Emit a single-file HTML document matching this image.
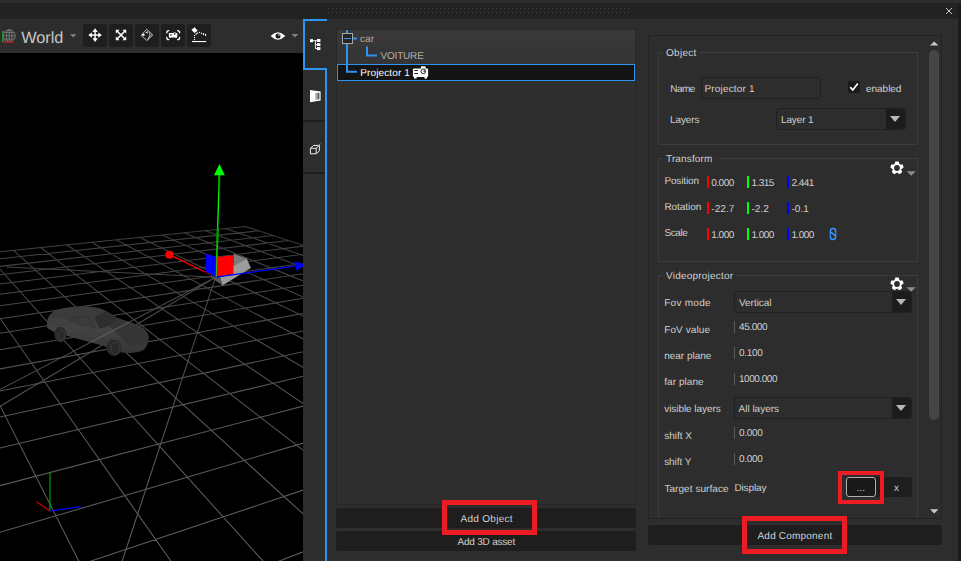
<!DOCTYPE html><html><head><meta charset="utf-8"><title>Scene editor</title><style>
*{box-sizing:border-box;margin:0;padding:0}
html,body{width:961px;height:561px;overflow:hidden;background:#2d2d2d}
body{position:relative;font-family:"Liberation Sans",sans-serif;font-size:10px;color:#d0d0d0;text-rendering:geometricPrecision}
.a{position:absolute}
.t{position:absolute;white-space:nowrap;line-height:12px;height:12px}
.btn{position:absolute;background:#1e1e1e;border-radius:3px}
.tb{position:absolute;top:24px;width:24px;height:23px;background:#1e1e1e;border-radius:3px}
.gb{position:absolute;border:1px solid #3c3c3c}
.gl{position:absolute;background:#2d2d2d;padding:0 3px;line-height:12px;height:12px;white-space:nowrap}
.bar{position:absolute;width:2px;height:12px}
.vb{position:absolute;width:1px;height:12px;background:#5a5a5a;left:734px}
.combo{position:absolute;border:1px solid #202020;border-radius:3px;background:#2d2d2d}
.dd{position:absolute;right:0;top:0;bottom:0;width:19px;background:#1c1c1c;border-radius:0 3px 3px 0}
.dd:after{content:"";position:absolute;left:4px;top:7px;border-left:5px solid transparent;border-right:5px solid transparent;border-top:6px solid #b8b8b8}
.red{position:absolute;border:5px solid #ed1c24}
</style></head><body>
<div class="a" style="left:0;top:3px;width:961px;height:16px;background:#222"></div>
<div class="a" style="left:958px;top:3px;width:3px;height:558px;background:#1c1c1c"></div>
<svg class="a" style="left:328px;top:8px" width="620" height="6"><defs><pattern id="dp" width="4" height="4" patternUnits="userSpaceOnUse"><rect width="1" height="1" fill="#454545"/></pattern></defs><rect width="301" height="5" fill="url(#dp)"/></svg>
<svg class="a" style="left:945px;top:7px" width="8" height="8"><path d="M1 1L7 7M7 1L1 7" stroke="#c8c8c8" stroke-width="1" fill="none"/></svg>
<svg class="a" style="left:0;top:26px" width="18" height="20" viewBox="0 26 18 20">
<g fill="none" stroke="#7c7c7c" stroke-width="0.9"><circle cx="9.2" cy="35.8" r="6"/><ellipse cx="9.2" cy="35.8" rx="2.8" ry="6"/><path d="M9.2 29.8V41.8M3.2 35.8H15.2M4.2 32.6H14.2M4.2 39H14.2"/></g>
<rect x="2" y="30.8" width="1.7" height="11.2" fill="#2c8c38"/><rect x="3" y="41.3" width="10.7" height="1.6" fill="#a82222"/></svg>
<div class="t" style="left:21.2px;top:28px;font-size:16.3px;line-height:20px;height:20px;color:#c8c8c8">World</div>
<svg class="a" style="left:69px;top:33px" width="9" height="6"><path d="M1 1.2H7.4L4.2 4.4z" fill="#858585"/></svg>
<div class="tb" style="left:83px"></div>
<div class="tb" style="left:109px"></div>
<div class="tb" style="left:135px"></div>
<div class="tb" style="left:161px"></div>
<div class="tb" style="left:187px"></div>
<svg class="a" style="left:83px;top:24px" width="24" height="23" viewBox="83 24 24 23"><g fill="#fff">
<path d="M95.1 28.3L97.8 31.9H92.4zM95.1 41.9L92.4 38.3H97.8zM88.3 35.1L91.9 32.4V37.8zM101.9 35.1L98.3 37.8V32.4z"/>
<rect x="94.4" y="31" width="1.4" height="8.2"/><rect x="91" y="34.4" width="8.2" height="1.4"/></g></svg>
<svg class="a" style="left:109px;top:24px" width="24" height="23" viewBox="109 24 24 23"><g fill="#fff">
<path d="M115.8 29.8H119.6L115.8 33.6zM126.2 29.8V33.6L122.4 29.8zM115.8 40.2V36.4L119.6 40.2zM126.2 40.2H122.4L126.2 36.4z"/></g>
<path d="M117 31L125 39M125 31L117 39" stroke="#fff" stroke-width="1.5" fill="none"/></svg>
<svg class="a" style="left:135px;top:24px" width="24" height="23" viewBox="135 24 24 23">
<path d="M146.7 29.2L152.8 35L147 40.6L141.1 35.5z" fill="none" stroke="#c4c4c4" stroke-width="0.9" stroke-linejoin="round"/>
<circle cx="143.4" cy="34.7" r="1.3" fill="#fff"/><path d="M145.4 32.4L147.6 30.9L147.7 33.6z" fill="#fff"/>
<path d="M149.2 31.6Q151 35.4 147.6 40M147.8 39.4L151.8 34" stroke="#c4c4c4" stroke-width="0.8" fill="none"/></svg>
<svg class="a" style="left:161px;top:24px" width="24" height="23" viewBox="161 24 24 23">
<g fill="none" stroke="#fff" stroke-width="1.3" stroke-linecap="round"><path d="M168.8 30.6Q166.8 30.6 166.8 32.8M177.6 30.6Q179.6 30.6 179.6 32.8M168.8 39.6Q166.8 39.6 166.8 37.4M177.6 39.6Q179.6 39.6 179.6 37.4"/></g>
<rect x="168.9" y="33" width="8.4" height="4.4" rx="0.6" fill="#fff"/><rect x="169.4" y="37.2" width="1.6" height="0.8" fill="#fff"/><rect x="175.2" y="37.2" width="1.6" height="0.8" fill="#fff"/><rect x="170" y="34.2" width="1.9" height="1.4" fill="#555"/><circle cx="174.6" cy="33.8" r="1.6" fill="#fff"/><circle cx="174.6" cy="33.9" r="0.9" fill="#333"/></svg>
<svg class="a" style="left:187px;top:24px" width="24" height="23" viewBox="187 24 24 23">
<path d="M191.4 29.7L194.7 27.2L197.6 30.7L194.4 33z" fill="#fff"/><path d="M195.3 33.8L197.8 32.3L198.3 33.3L195.9 34.9z" fill="#e4e4e4"/>
<g fill="#f0f0f0"><rect x="198.9" y="31.9" width="1.1" height="1.1"/><rect x="200.9" y="32.7" width="1.1" height="1.3"/><rect x="202.9" y="33.1" width="1.2" height="2"/><rect x="205" y="33.8" width="1.1" height="2.2"/>
<rect x="193.9" y="34.9" width="1.2" height="1.2"/><rect x="193.9" y="36.9" width="1.2" height="1.2"/><rect x="193.9" y="39" width="1.2" height="1.2"/></g>
<rect x="192" y="41" width="14.2" height="1.1" fill="#fff"/></svg>
<svg class="a" style="left:268px;top:30px" width="34" height="12" viewBox="268 30 34 12">
<path d="M270.6 36Q277.9 28.6 285.3 36Q277.9 43.4 270.6 36z" fill="#fff"/><circle cx="278" cy="35.9" r="2.5" fill="#1a1a1a"/><circle cx="278.8" cy="35" r="1" fill="#aaa"/>
<path d="M291.4 34H298.4L294.9 37.4z" fill="#808080"/></svg>
<svg class="a" style="left:0;top:53px" width="303" height="508" viewBox="0 53 303 508"><rect x="0" y="53" width="303" height="508" fill="#000"/>
<defs><linearGradient id="gg" gradientUnits="userSpaceOnUse" x1="0" y1="230" x2="0" y2="480"><stop offset="0" stop-color="#3c3c3c"/><stop offset="0.3" stop-color="#4a4a4a"/><stop offset="1" stop-color="#5e5e5e"/></linearGradient></defs>
<path d="M245.4 226.4L-326.7 285.3M258.8 230.8L-335.0 294.8M273.1 235.5L-344.3 305.3M288.5 240.5L-354.5 316.9M304.9 245.9L-366.0 329.8M322.7 251.7L-378.8 344.4M341.8 258.0L-393.4 360.8M362.6 264.8L-410.0 379.6M385.1 272.2L-429.1 401.3M409.7 280.2L-451.4 426.5M436.6 289.0L-477.6 456.2M466.1 298.7L-509.0 491.7M498.8 309.5L-547.3 535.0M535.1 321.3L-594.9 588.8M575.7 334.6L-655.7 657.6M621.2 349.6L-736.2 748.7M672.9 366.5L-847.7 874.9M731.8 385.8L-1012.5 1061.4M799.8 408.1L-1280.8 1365.0M879.0 434.0L-1794.6 1946.3M972.4 464.7L-3174.9 3508.1M245.4 226.4L972.4 464.7M225.6 228.4L949.2 481.7M205.1 230.5L923.7 500.4M184.0 232.7L895.6 521.0M162.1 235.0L864.5 543.9M139.5 237.3L829.7 569.4M116.1 239.7L790.7 598.0M91.8 242.2L746.7 630.3M66.7 244.8L696.5 667.2M40.6 247.5L638.8 709.5M13.6 250.3L571.8 758.6M-14.5 253.2L493.1 816.4M-43.8 256.2L399.2 885.3M-74.1 259.3L285.4 968.9M-105.8 262.6L144.4 1072.3M-138.7 266.0L-34.8 1203.8M-173.1 269.5L-269.9 1376.3M-209.0 273.2L-592.3 1612.9M-246.5 277.1L-1061.3 1957.1M-285.6 281.1L-1806.8 2504.1M-326.7 285.3L-3174.9 3508.1" stroke="url(#gg)" stroke-width="1.05" fill="none"/>
<path d="M215.6 277.2L6.2 266.9M215.6 277.2L-64.7 445.2M215.6 277.2L-64.7 423.2M215.6 277.2L103.5 617.8" stroke="url(#gg)" stroke-width="1.05" fill="none"/>
<g>
<defs><linearGradient id="cg" x1="0" y1="0" x2="0" y2="1"><stop offset="0" stop-color="#3c3c3c"/><stop offset="0.5" stop-color="#434343"/><stop offset="1" stop-color="#353535"/></linearGradient>
<filter id="cb" x="-5%" y="-5%" width="110%" height="110%"><feGaussianBlur stdDeviation="0.5"/></filter></defs>
<g filter="url(#cb)">
<path d="M47.2 328Q46.6 320 48.6 316.8Q51 312.6 56.4 310.2Q62 308 68 307.4Q78 306 88 306.6Q96 307 102.4 309.4Q108 311.6 117 318L131 322.6Q139.4 325.4 143.6 328.8Q148.2 332.4 148.6 336.4Q149 340 147.8 343.4Q146 348.4 142.4 350.8Q138 352.8 131 353L121 352.4L104.6 346.3L67.5 336L54.4 332.3z" fill="url(#cg)"/>
<path d="M49 317Q52 312.6 57 310.4Q64 308 76 306.8Q90 306 100 308.6Q107 311 117 318L131 322.8Q141 326.4 144.4 329.6Q139 331 131 330Q122 329 112 326L96 323Q80 320 49 317z" fill="#3b3b3b"/>
<path d="M94.5 316.8L106.2 311L117.9 319L118 321.6L109.1 325.8L99.6 328.6z" fill="#2d2d2d"/>
<path d="M117.9 319L130.3 322.7L143.5 329.2Q148.4 333 148.5 337.5L147.5 343Q140 346 128 345Q120 336 109.1 325.8z" fill="#353535"/>
<path d="M68.8 320.8L73 317.2L77 316.7L76 322.6zM77.8 322.2L80 316.8L86.6 316.8L92.6 321L96.2 328.2L78.2 323.9z" fill="#3a3a3a" stroke="#303030" stroke-width="0.6"/>
<ellipse cx="114" cy="347.8" rx="7.6" ry="8.2" fill="#2a2a2a"/><ellipse cx="115.4" cy="348.2" rx="4.6" ry="6" fill="none" stroke="#3e3e3e" stroke-width="0.9"/>
<ellipse cx="60.4" cy="334.6" rx="6.2" ry="7.8" fill="#2a2a2a"/><ellipse cx="61.4" cy="335.2" rx="3.6" ry="5.2" fill="none" stroke="#3b3b3b" stroke-width="0.9"/>
</g></g>
<path d="M215.6 277.2L-64.7 423.2" stroke="#5e5e5e" stroke-width="1.1" fill="none" clip-path="url(#carclip)"/>
<defs><clipPath id="carclip"><path d="M47 328L49 316L56 311L68 307.6L88 306.4L102 309.4L117 317.6L131 323L143 328.4L148.6 336L148 343L143 350.4L131 353L105 346.3L67 336L54 332.5z"/></clipPath></defs>
<g>
<path d="M233.4 253.7L246.8 258.4L233.4 265.8z" fill="#7c7c7c"/>
<path d="M233.2 265.8L246.8 258.4L250.9 268.1L222.5 285.6L219.8 277.2L233.2 274z" fill="#9c9c9c"/>
<path d="M210.6 277.2H220L222.5 285.6z" fill="#565656"/>
<path d="M205 272L171 255.4" stroke="#ff0000" stroke-width="1.3"/>
<path d="M206.2 253.4L215.8 257.2V277L205.6 271.2z" fill="#0000ff"/>
<path d="M215.6 277.4L205 272.2" stroke="#ff0000" stroke-width="1.2" stroke-dasharray="0.9 1.1"/>
<path d="M215.8 257.2L233.4 255.3L233.1 274L215.8 277z" fill="#ff0000"/>
<path d="M215.6 277.2L294.5 266.2" stroke="#0000ff" stroke-width="1.25"/>
<path d="M294.1 261.6L296.7 271L305.4 264.4z" fill="#0000ff"/>
<circle cx="169.4" cy="254.7" r="4" fill="#ff0000"/>
<path d="M216.2 277.2L216.8 257" stroke="#30c000" stroke-width="1"/><path d="M216.8 257L219.3 175" stroke="#00ff00" stroke-width="1.3"/>
<path d="M219 187L219.3 175" stroke="#00a400" stroke-width="2.2"/>
<path d="M217.4 243L217.8 229" stroke="#00a400" stroke-width="2.2"/>
<path d="M219.5 164L224.8 175.2H214z" fill="#00ff00"/>
</g>
<g stroke-width="1.2" fill="none"><path d="M50 511V473" stroke="#00a000"/><path d="M50 511L36.6 501.8" stroke="#d00000"/><path d="M50 511L80.8 506.7" stroke="#0000ff"/></g>
</svg>
<div class="a" style="left:303px;top:19px;width:24px;height:2px;background:#2f93f0"></div>
<div class="a" style="left:303px;top:19px;width:2px;height:51px;background:#2f93f0"></div>
<div class="a" style="left:303px;top:68px;width:24px;height:2px;background:#2f93f0"></div>
<div class="a" style="left:325px;top:68px;width:2px;height:493px;background:#2f93f0"></div>
<div class="a" style="left:303px;top:120px;width:22px;height:2px;background:#1e1e1e"></div>
<div class="a" style="left:303px;top:172px;width:22px;height:2px;background:#1e1e1e"></div>
<svg class="a" style="left:308px;top:37px" width="15" height="15" viewBox="308 37 15 15"><g fill="#fff"><rect x="310" y="39.2" width="3" height="3"/><rect x="317" y="39" width="3.4" height="3"/><rect x="317" y="43.2" width="3.4" height="2.8"/><rect x="317" y="47.1" width="3.4" height="3"/></g>
<path d="M313 40.7H317M315.4 40.7V48.6H317M315.4 44.6H317" stroke="#fff" stroke-width="0.9" fill="none"/></svg>
<svg class="a" style="left:308px;top:88px" width="15" height="16" viewBox="308 88 15 16"><defs><linearGradient id="g2" x1="0" x2="1"><stop offset="0" stop-color="#fff"/><stop offset="0.55" stop-color="#fff"/><stop offset="1" stop-color="#555"/></linearGradient></defs>
<path d="M310 90L320.6 91.4V100.6L310 102.2z" fill="#fff"/><path d="M314.5 92.4L319.4 92.9V99.3L314.5 99.9z" fill="url(#g3)"/>
<defs><linearGradient id="g3" x1="0" x2="1"><stop offset="0" stop-color="#eee"/><stop offset="1" stop-color="#444"/></linearGradient></defs></svg>
<svg class="a" style="left:308px;top:141px" width="15" height="16" viewBox="308 141 15 16"><g fill="none" stroke="#ececec" stroke-width="1" stroke-linejoin="round"><path d="M310.4 148.3H316.2V153.8H310.4zM310.4 148.3L313.6 145.4H319.4L316.2 148.3M319.4 145.4V150.9L316.2 153.8"/></g><path d="M317 147.4L320.6 143.6" stroke="#9a9a9a" stroke-width="1"/></svg>
<div class="a" style="left:336px;top:29px;width:300px;height:476px;border:1px solid #272727;background:#2e2e2e"></div>
<div class="a" style="left:337px;top:30px;width:298px;height:17px;background:#383838"></div>
<div class="a" style="left:337px;top:47px;width:298px;height:17px;background:#353535"></div>
<div class="a" style="left:337px;top:64px;width:298px;height:17px;background:#141414;border:1px solid #2f93f0"></div>
<svg class="a" style="left:337px;top:30px" width="100" height="52" viewBox="337 30 100 52">
<path d="M347 30V33M347 44V71.7H357M353 38.5H357M367 46.5V55.5H377" stroke="#2f93f0" stroke-width="2" fill="none"/>
<rect x="342.5" y="33.5" width="10" height="10" fill="#242424" stroke="#a8a8a8" stroke-width="1"/><path d="M344 38.5H351" stroke="#2f93f0" stroke-width="1"/>
<g fill="#fff"><rect x="412.9" y="68.4" width="15.2" height="8.6" rx="1.2"/><rect x="414.1" y="77" width="2.5" height="1.6"/><rect x="424.5" y="77" width="2.5" height="1.6"/><rect x="420.9" y="66.2" width="4.7" height="2.6" rx="0.6"/></g>
<circle cx="423.3" cy="71.4" r="2.3" fill="#fff" stroke="#141414" stroke-width="0.9"/><circle cx="424.3" cy="71.2" r="0.9" fill="#555"/><path d="M414.2 70.5H418M414.2 73.5H418" stroke="#141414" stroke-width="0.9"/></svg>
<div class="t" style="left:360px;top:34.1px;color:#b2ada6;letter-spacing:0.10px;">car</div>
<div class="t" style="left:380.5px;top:51.3px;color:#b2ada6;letter-spacing:-0.19px;">VOITURE</div>
<div class="t" style="left:360.3px;top:68.3px;color:#fff;letter-spacing:0.12px;">Projector 1</div>
<div class="btn" style="left:336px;top:508px;width:300px;height:20px"></div>
<div class="btn" style="left:336px;top:531px;width:300px;height:20px"></div>
<div class="t" style="left:460.5px;top:514px;letter-spacing:0.29px;">Add Object</div>
<div class="t" style="left:457.5px;top:537px;letter-spacing:-0.21px;">Add 3D asset</div>
<div class="red" style="left:442px;top:500px;width:95px;height:35px"></div>
<div class="a" style="left:648px;top:35px;width:294px;height:484px;border:1px solid #232323;overflow:hidden">
<div class="gb" style="left:9px;top:16px;width:260px;height:93px"></div>
<div class="gl" style="left:14px;top:12px;letter-spacing:0.30px;">Object</div>
<div class="gb" style="left:9px;top:122px;width:260px;height:104px"></div>
<div class="gl" style="left:14px;top:118px;letter-spacing:0.15px;">Transform</div>
<div class="gb" style="left:9px;top:239px;width:260px;height:300px"></div>
<div class="gl" style="left:14px;top:235px;letter-spacing:0.22px;">Videoprojector</div>
<div class="t" style="left:21.2px;top:48.0px;letter-spacing:-0.50px;">Name</div>
<div class="combo" style="left:52px;top:41px;width:120px;height:22px"></div>
<div class="t" style="left:55.5px;top:48.0px;letter-spacing:0.17px;">Projector 1</div>
<div class="a" style="left:199px;top:45px;width:12px;height:12px;background:#191919;border-radius:2px"><svg width="12" height="12"><path d="M2.2 6.2L4.8 9L9.8 2.6" stroke="#fff" stroke-width="1.7" fill="none"/></svg></div>
<div class="t" style="left:217.0px;top:48.0px;letter-spacing:-0.03px;">enabled</div>
<div class="t" style="left:21.0px;top:79.0px;letter-spacing:-0.12px;">Layers</div>
<div class="combo" style="left:127px;top:72px;width:130px;height:22px"><div class="dd"></div></div>
<div class="t" style="left:132.0px;top:79.0px;letter-spacing:-0.13px;">Layer 1</div>
<svg class="a" style="left:240.2px;top:123.7px" width="28" height="16" viewBox="-8 -8 28 16"><path d="M-1.27 -5.97L1.27 -5.97L2.17 -2.99L5.28 -3.05L6.07 -0.64L3.52 1.14L4.53 4.08L2.48 5.57L0.00 3.70L-2.48 5.57L-4.53 4.08L-3.52 1.14L-6.07 -0.64L-5.28 -3.05L-2.17 -2.99z" fill="#fff" stroke="#fff" stroke-width="1.1" stroke-linejoin="round"/><circle cx="0" cy="0" r="2.9" fill="#2d2d2d"/><path d="M9.6 3.2H18.8L14.2 7.7z" fill="#8c8c8c"/></svg>
<svg class="a" style="left:240.4px;top:240.3px" width="28" height="16" viewBox="-8 -8 28 16"><path d="M-1.27 -5.97L1.27 -5.97L2.17 -2.99L5.28 -3.05L6.07 -0.64L3.52 1.14L4.53 4.08L2.48 5.57L0.00 3.70L-2.48 5.57L-4.53 4.08L-3.52 1.14L-6.07 -0.64L-5.28 -3.05L-2.17 -2.99z" fill="#fff" stroke="#fff" stroke-width="1.1" stroke-linejoin="round"/><circle cx="0" cy="0" r="2.9" fill="#2d2d2d"/><path d="M9.6 3.2H18.8L14.2 7.7z" fill="#8c8c8c"/></svg>
<div class="t" style="left:15.4px;top:140.0px;letter-spacing:-0.14px;">Position</div>
<div class="bar" style="left:58px;top:140px;background:#ff0000"></div>
<div class="t" style="left:62.3px;top:142.0px;letter-spacing:-0.51px;">0.000</div>
<div class="bar" style="left:98px;top:140px;background:#00ff00"></div>
<div class="t" style="left:102.4px;top:142.0px;letter-spacing:-0.51px;">1.315</div>
<div class="bar" style="left:138px;top:140px;background:#0000ff"></div>
<div class="t" style="left:142.4px;top:142.0px;letter-spacing:-0.51px;">2.441</div>
<div class="t" style="left:15.4px;top:166.0px;letter-spacing:-0.04px;">Rotation</div>
<div class="bar" style="left:58px;top:166px;background:#ff0000"></div>
<div class="t" style="left:62.3px;top:168.0px;letter-spacing:0.05px;">-22.7</div>
<div class="bar" style="left:98px;top:166px;background:#00ff00"></div>
<div class="t" style="left:102.4px;top:168.0px;letter-spacing:0.06px;">-2.2</div>
<div class="bar" style="left:138px;top:166px;background:#0000ff"></div>
<div class="t" style="left:142.4px;top:168.0px;letter-spacing:0.06px;">-0.1</div>
<div class="t" style="left:15.4px;top:192.0px;letter-spacing:-0.38px;">Scale</div>
<div class="bar" style="left:58px;top:192px;background:#ff0000"></div>
<div class="t" style="left:62.3px;top:194.0px;letter-spacing:-0.51px;">1.000</div>
<div class="bar" style="left:98px;top:192px;background:#00ff00"></div>
<div class="t" style="left:102.4px;top:194.0px;letter-spacing:-0.51px;">1.000</div>
<div class="bar" style="left:138px;top:192px;background:#0000ff"></div>
<div class="t" style="left:142.4px;top:194.0px;letter-spacing:-0.51px;">1.000</div>
<svg class="a" style="left:177.0px;top:188.0px" width="14" height="20" viewBox="826 224 14 20"><g fill="none" stroke="#3399ff" stroke-width="1.5" stroke-linecap="round"><path d="M830.4 234V231A2.6 2.6 0 0 1 835.6 231V232.2"/><path d="M835.6 234V237A2.6 2.6 0 0 1 830.4 237V235.8"/><path d="M831.6 232.7L834.6 235.1"/></g></svg>
<div class="t" style="left:15.2px;top:262.0px;letter-spacing:0.28px;">Fov mode</div>
<div class="combo" style="left:85px;top:255px;width:178px;height:22px"><div class="dd"></div></div>
<div class="t" style="left:90.0px;top:262.0px;letter-spacing:-0.03px;">Vertical</div>
<div class="t" style="left:15.2px;top:289.0px;letter-spacing:0.10px;">FoV value</div>
<div class="vb" style="left:85px;top:285px"></div>
<div class="t" style="left:90.0px;top:286.0px;letter-spacing:-0.42px;">45.000</div>
<div class="t" style="left:15.2px;top:315.0px;letter-spacing:-0.01px;">near plane</div>
<div class="vb" style="left:85px;top:311px"></div>
<div class="t" style="left:90.0px;top:312.0px;letter-spacing:-0.28px;">0.100</div>
<div class="t" style="left:15.2px;top:341.0px;letter-spacing:0.07px;">far plane</div>
<div class="vb" style="left:85px;top:337px"></div>
<div class="t" style="left:90.0px;top:338.0px;letter-spacing:-0.46px;">1000.000</div>
<div class="t" style="left:15.2px;top:368.0px;letter-spacing:-0.05px;">visible layers</div>
<div class="combo" style="left:85px;top:361px;width:178px;height:22px"><div class="dd"></div></div>
<div class="t" style="left:89.5px;top:368.0px;letter-spacing:0.00px;">All layers</div>
<div class="t" style="left:15.2px;top:395.0px;letter-spacing:-0.03px;">shift X</div>
<div class="vb" style="left:85px;top:391px"></div>
<div class="t" style="left:90.0px;top:392.0px;letter-spacing:-0.28px;">0.000</div>
<div class="t" style="left:15.2px;top:421.0px;letter-spacing:-0.07px;">shift Y</div>
<div class="vb" style="left:85px;top:417px"></div>
<div class="t" style="left:90.0px;top:418.0px;letter-spacing:-0.28px;">0.000</div>
<div class="t" style="left:15.4px;top:448.0px;letter-spacing:0.06px;">Target surface</div>
<div class="t" style="left:85.4px;top:447.0px;letter-spacing:-0.13px;">Display</div>
<div class="a" style="left:197px;top:441px;width:66px;height:20px;background:#1e1e1e;border-radius:3px"></div>
<div class="a" style="left:197px;top:441px;width:30px;height:20px;background:#191919;border:1px solid #b0b0b0;border-radius:3px"></div>
<div class="t" style="left:207.8px;top:447.0px;">...</div>
<div class="t" style="left:245.0px;top:447.0px;">x</div>
<div class="a" style="left:280px;top:14px;width:10px;height:370px;background:#464646;border-radius:5px"></div>
<svg class="a" style="left:281px;top:5px" width="9" height="5"><path d="M0 4.6H8.4L4.2 0.4z" fill="#c8c8c8"/></svg>
<svg class="a" style="left:281px;top:473px" width="9" height="5"><path d="M0 0.2H8.4L4.2 4.4z" fill="#c8c8c8"/></svg>
</div>
<div class="red" style="left:838px;top:471px;width:46px;height:33px;border-width:4px"></div>
<div class="btn" style="left:648px;top:525px;width:294px;height:20px"></div>
<div class="t" style="left:757.5px;top:531px;letter-spacing:0.20px;">Add Component</div>
<div class="red" style="left:742px;top:516px;width:105px;height:38px"></div>
</body></html>
